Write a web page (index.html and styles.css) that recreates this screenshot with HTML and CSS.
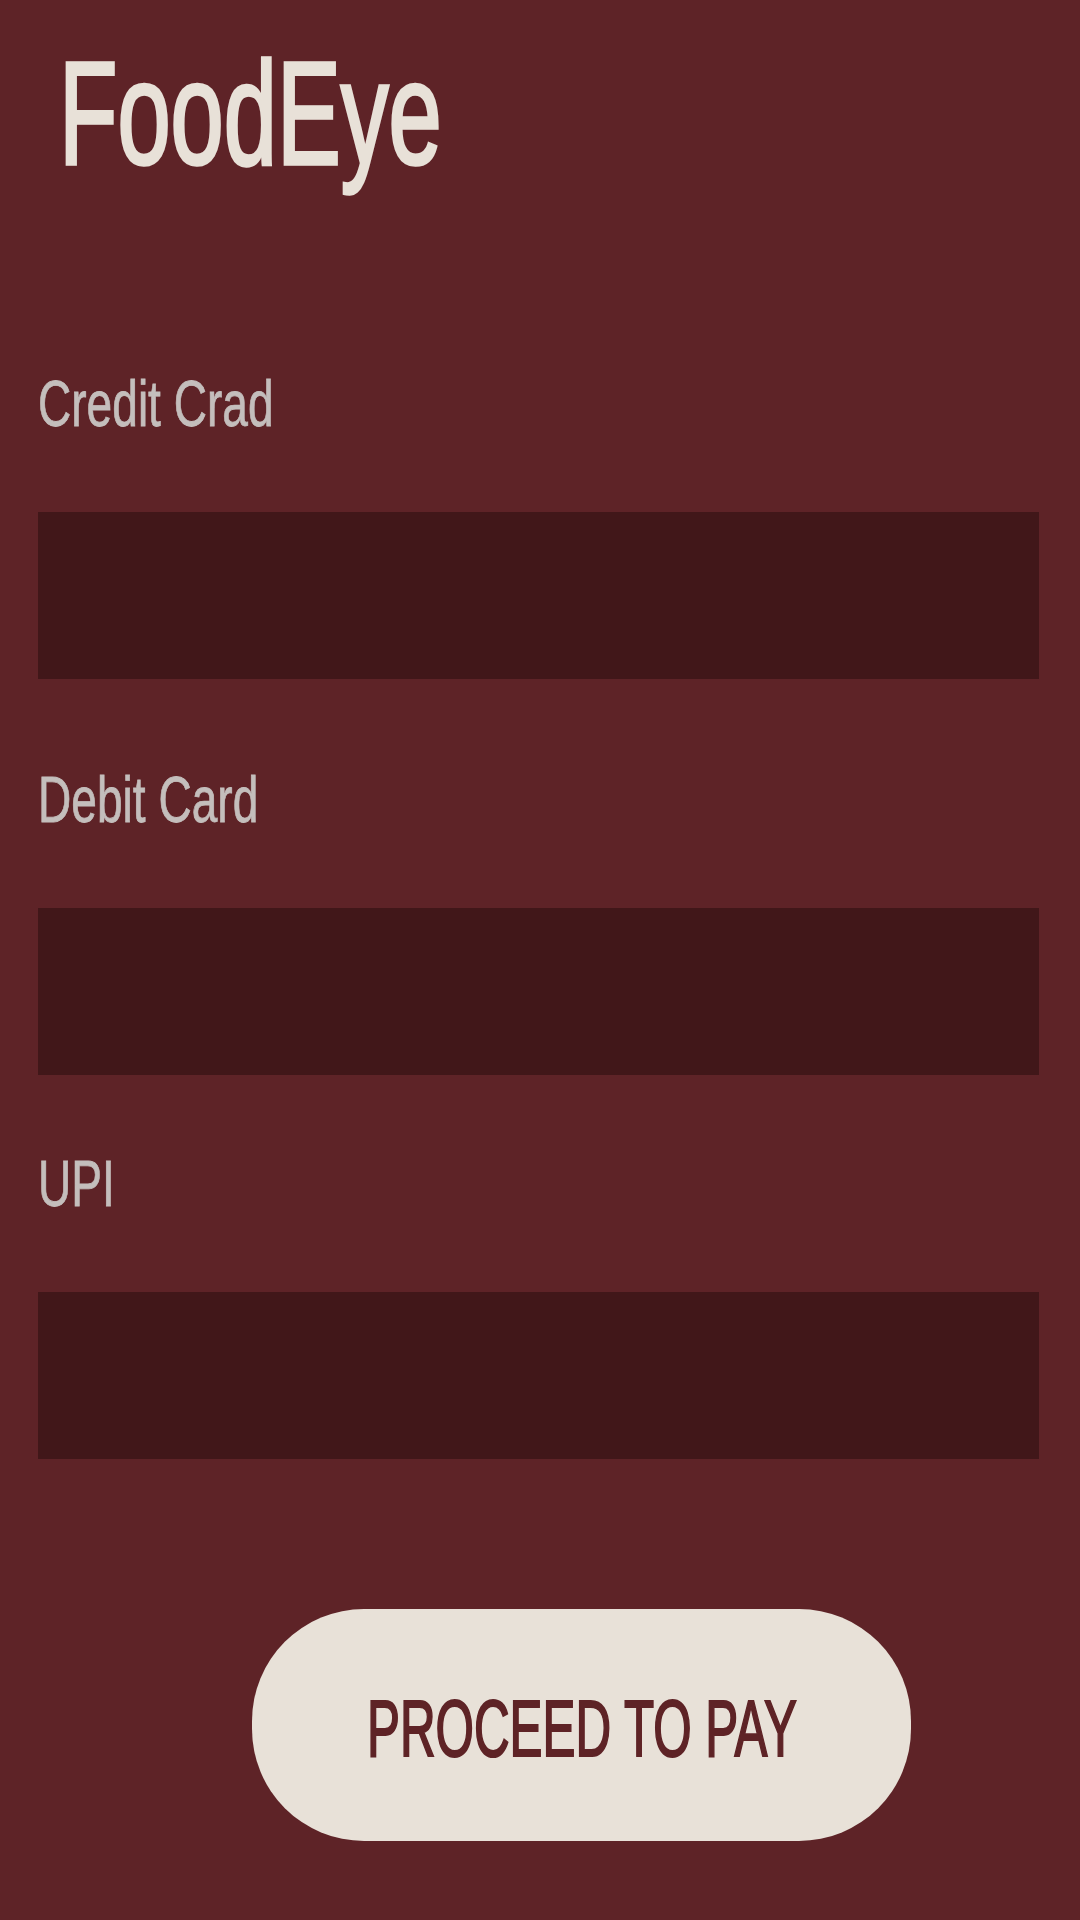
FILE: index.html
```html
<!DOCTYPE html>
<html lang="en">
<head>
<meta charset="utf-8">
<title>FoodEye</title>
<link rel="stylesheet" href="styles.css">
</head>
<body>
<main class="page">
  <h1 class="brand"><span class="brand-text">FoodEye</span></h1>
  <form class="pay-form">
    <label class="field field-credit">
      <span class="field-label">Credit Crad</span>
      <input class="field-input" type="text">
    </label>
    <label class="field field-debit">
      <span class="field-label">Debit Card</span>
      <input class="field-input" type="text">
    </label>
    <label class="field field-upi">
      <span class="field-label">UPI</span>
      <input class="field-input" type="text">
    </label>
    <button class="pay-button" type="button"><span class="pay-text">PROCEED TO PAY</span></button>
  </form>
</main>
</body>
</html>
```
FILE: styles.css
```css
html, body {
  margin: 0;
  padding: 0;
  background: #5e2327;
}
body {
  width: 1080px;
  height: 1920px;
  overflow: hidden;
  font-family: "Liberation Sans", Arial, sans-serif;
}
.page {
  display: flex;
  flex-direction: column;
  padding: 40px 41px 0 38px;
}
.brand {
  margin: 0 0 0 21px;
  font-size: 146px;
  line-height: 148px;
  font-weight: 400;
  color: #e8e1d8;
  height: 148px;
}
.brand-text {
  display: inline-block;
  transform: scaleX(0.655);
  transform-origin: left center;
  white-space: nowrap;
  -webkit-text-stroke: 3.5px #e8e1d8;
}
.pay-form {
  display: flex;
  flex-direction: column;
}
.field {
  display: flex;
  flex-direction: column;
  gap: 76px;
}
.field-credit { margin-top: 184px; }
.field-debit { margin-top: 89px; }
.field-upi { margin-top: 77px; }
.field-label {
  display: block;
  font-size: 64px;
  line-height: 64px;
  height: 64px;
  color: #c4bebc;
  transform: scaleX(0.72);
  transform-origin: left center;
  white-space: nowrap;
  -webkit-text-stroke: 0.8px #c4bebc;
}
.field-input {
  display: block;
  width: 1001px;
  height: 167px;
  box-sizing: border-box;
  margin: 0;
  border: 0;
  padding: 0;
  background: #411719;
  outline: none;
}
.pay-button {
  margin: 150px 0 0 214px;
  width: 659px;
  height: 232px;
  border: 0;
  border-radius: 112px;
  background: #e8e1d8;
  color: #5e2326;
  font-family: "Liberation Sans", Arial, sans-serif;
  font-size: 79px;
  font-weight: 400;
  line-height: 80px;
  padding: 8px 0 0 0;
  display: flex;
  align-items: center;
  justify-content: center;
  overflow: visible;
}
.pay-text {
  display: inline-block;
  transform: scaleX(0.625);
  transform-origin: center center;
  white-space: nowrap;
  -webkit-text-stroke: 2px #5e2326;
}
```
